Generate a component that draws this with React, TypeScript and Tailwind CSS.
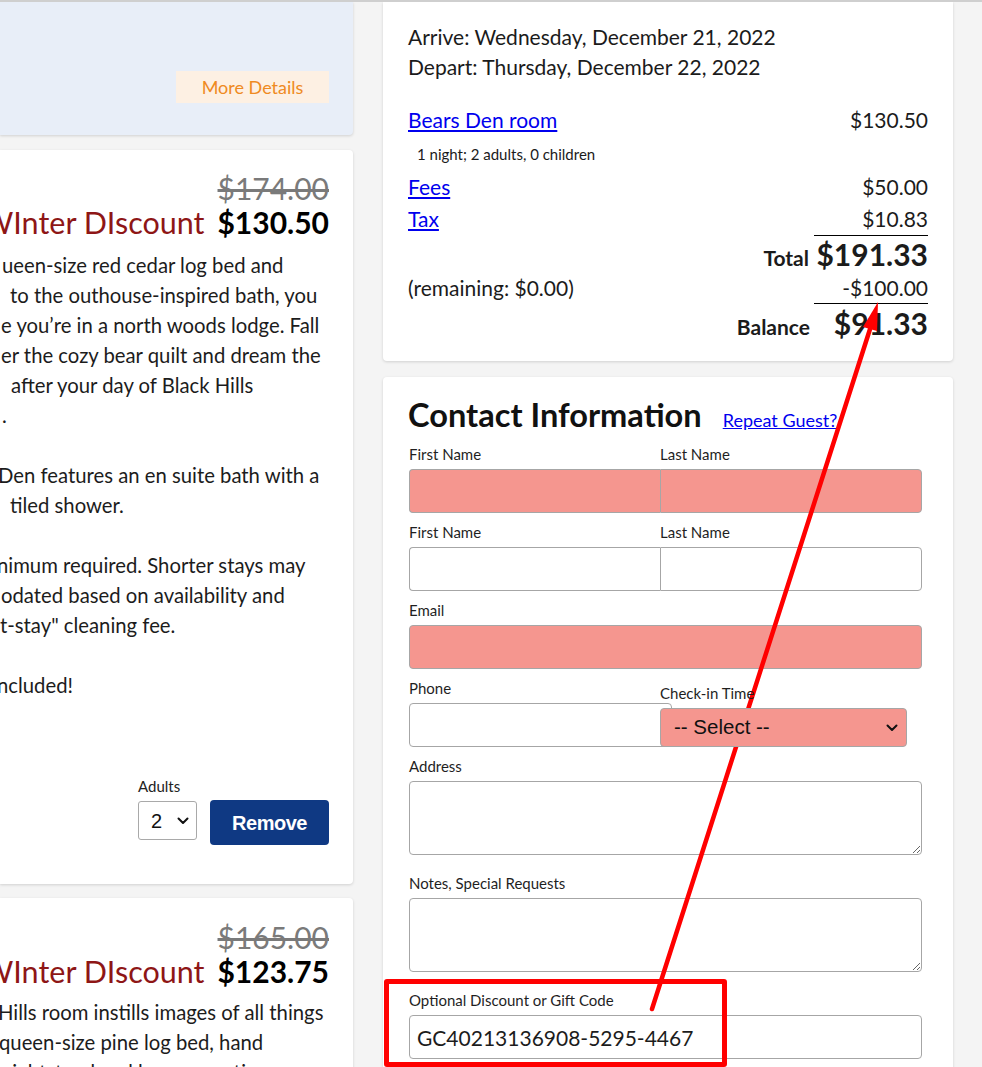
const salmon = "bg-[#f5968f]";

function Chevron({ className }: { className?: string }) {
  return (
    <svg viewBox="0 0 12 8" className={className} fill="none" stroke="currentColor" strokeWidth={2} strokeLinecap="round" strokeLinejoin="round">
      <path d="M1.5 1.5 6 6l4.5-4.5" />
    </svg>
  );
}

function Heading({ was, now }: { was: string; now: string }) {
  return (
    <div className="flex items-end justify-end gap-[13px]">
      <span className="shrink-0 whitespace-nowrap text-[30.5px] leading-[34px] text-[#8e1616]">WInter DIscount</span>
      <div className="flex shrink-0 flex-col items-end">
        <span className="text-[30px] leading-[34px] text-[#7a7a7a] line-through">{was}</span>
        <span className="text-[30px] leading-[34px] font-bold text-black">{now}</span>
      </div>
    </div>
  );
}

const roomLines: { t: string; c: string }[] = [
  { t: "ueen-size red cedar log bed and", c: "ml-[2px]" },
  { t: "to the outhouse-inspired bath, you", c: "ml-[10px]" },
  { t: "e you’re in a north woods lodge. Fall", c: "ml-[1px]" },
  { t: "er the cozy bear quilt and dream the", c: "ml-[1px]" },
  { t: "after your day of Black Hills", c: "ml-[11px]" },
  { t: ".", c: "ml-[2px]" },
  { t: "", c: "" },
  { t: "Den features an en suite bath with a", c: "-ml-[2px]" },
  { t: "tiled shower.", c: "ml-[10px]" },
  { t: "", c: "" },
  { t: "nimum required. Shorter stays may", c: "-ml-[3px]" },
  { t: "odated based on availability and", c: "ml-[1px]" },
  { t: "t-stay\" cleaning fee.", c: "ml-[0px]" },
  { t: "", c: "" },
  { t: "ncluded!", c: "-ml-[3px]" },
];

function Field({ label, children, className }: { label: string; children: React.ReactNode; className?: string }) {
  return (
    <div className={className}>
      <div className="text-[15px] leading-[20px] text-[#1f1f1f]">{label}</div>
      <div className="mt-[5px]">{children}</div>
    </div>
  );
}

export default function App() {
  return (
    <div className="relative h-[1067px] overflow-hidden border-t-2 border-[#cfcfcf] bg-[#f4f4f4] font-['Lato',sans-serif] text-[#1b1b1b]">
      <div className="flex gap-[30px]">
        {/* left column: room cards */}
        <div className="flex w-[353px] shrink-0 flex-col">
          <div className="flex h-[133px] items-end justify-end rounded-br-[4px] bg-[#e8eef8] pr-[24px] pb-[32px] shadow-[0_1px_3px_rgba(0,0,0,0.15)]">
            <div className="flex h-[32px] w-[153px] items-center justify-center bg-[#fdf0e3] text-[18px] text-[#ef8a22]">More Details</div>
          </div>

          <div className="mt-[15px] rounded-r-[4px] bg-white pt-[21px] pr-[24px] pb-[39px] shadow-[0_1px_3px_rgba(0,0,0,0.15)]">
            <Heading was="$174.00" now="$130.50" />
            <div className="mt-[11px] text-[20.3px] leading-[30px] text-[#1c1c1c]">
              {roomLines.map((l, i) =>
                l.t ? (
                  <div key={i} className={"whitespace-nowrap " + l.c}>{l.t}</div>
                ) : (
                  <div key={i} className="h-[30px]" />
                )
              )}
            </div>
            <div className="mt-[76px] flex items-end justify-end gap-[13px]">
              <div className="flex flex-col">
                <span className="text-[15px] leading-[20px] text-[#222]">Adults</span>
                <div className="mt-[5px] mb-[5px] flex h-[39px] w-[59px] items-center justify-between rounded-[3px] border border-[#a9a9a9] pl-[12px] pr-[7px] font-['Liberation_Sans',Arial,sans-serif] text-[20px] text-[#111]">
                  <span>2</span>
                  <Chevron className="w-[12px] h-[8px] text-[#111]" />
                </div>
              </div>
              <button className="flex h-[45px] w-[119px] items-center justify-center rounded-[4px] bg-[#0f3983] font-['Liberation_Sans',Arial,sans-serif] text-[20px] font-bold tracking-[-0.5px] text-white">
                Remove
              </button>
            </div>
          </div>

          <div className="mt-[14px] rounded-r-[4px] bg-white pt-[22px] pr-[24px] pb-[40px] shadow-[0_1px_3px_rgba(0,0,0,0.15)]">
            <Heading was="$165.00" now="$123.75" />
            <div className="mt-[9px] text-[20.3px] leading-[30px] text-[#1c1c1c]">
              <div className="-ml-[2px] whitespace-nowrap">Hills room instills images of all things</div>
              <div className="-ml-[1px] whitespace-nowrap">queen-size pine log bed, hand</div>
              <div className="ml-[1px] whitespace-nowrap">nightstand and lamp, a rustic</div>
            </div>
          </div>
        </div>

        {/* right column: summary and contact */}
        <div className="flex w-[570px] shrink-0 flex-col">
          <div className="rounded-b-[4px] bg-white pt-[20px] pr-[25px] pb-[19px] pl-[25px] text-[21px] shadow-[0_1px_3px_rgba(0,0,0,0.15)]">
            <div className="leading-[30px]">Arrive: Wednesday, December 21, 2022</div>
            <div className="leading-[30px]">Depart: Thursday, December 22, 2022</div>

            <div className="mt-[23px] grid grid-cols-[1fr_114px] leading-[30px]">
              <a className="justify-self-start text-[#0000ee] underline">Bears Den room</a>
              <span className="text-right">$130.50</span>
            </div>
            <div className="mt-[9px] pl-[9px] text-[15px] leading-[20px]">1 night; 2 adults, 0 children</div>
            <div className="mt-[7px] grid grid-cols-[1fr_114px] leading-[32px]">
              <a className="justify-self-start text-[#0000ee] underline">Fees</a>
              <span className="text-right">$50.00</span>
            </div>
            <div className="grid grid-cols-[1fr_114px] leading-[32px]">
              <a className="justify-self-start text-[#0000ee] underline">Tax</a>
              <span className="text-right">$10.83</span>
            </div>
            <div className="grid grid-cols-[1fr_114px] items-baseline">
              <span className="pr-[5px] text-right font-bold leading-[30px]">Total</span>
              <span className="border-t border-black text-right text-[30px] font-bold leading-[36px]">$191.33</span>
            </div>
            <div className="grid grid-cols-[1fr_114px] leading-[30px]">
              <span>(remaining: $0.00)</span>
              <span className="text-right">-$100.00</span>
            </div>
            <div className="grid grid-cols-[1fr_114px] items-baseline">
              <span className="pr-[4px] text-right font-bold leading-[30px]">Balance</span>
              <span className="border-t border-black text-right text-[30px] font-bold leading-[38px]">$91.33</span>
            </div>
          </div>

          <div className="mt-[16px] rounded-t-[4px] bg-white pt-[18px] pr-[31px] pb-[40px] pl-[26px] shadow-[0_1px_3px_rgba(0,0,0,0.15)]">
            <div className="flex items-baseline gap-[21px]">
              <h2 className="-ml-[1px] text-[32.6px] font-bold leading-[40px] text-[#111]">Contact Information</h2>
              <a className="text-[18px] text-[#0000ee] underline">Repeat Guest?</a>
            </div>

            <div className="mt-[9px] grid grid-cols-[251px_1fr]">
              <Field label="First Name">
                <div className={"h-[44px] rounded-l-[4px] border border-r-0 border-[#a6a6a6] " + salmon} />
              </Field>
              <Field label="Last Name">
                <div className={"h-[44px] rounded-r-[4px] border border-[#a6a6a6] " + salmon} />
              </Field>
            </div>

            <div className="mt-[9px] grid grid-cols-[251px_1fr]">
              <Field label="First Name">
                <input className="block h-[44px] w-full rounded-l-[4px] border border-r-0 border-[#a6a6a6] bg-white" />
              </Field>
              <Field label="Last Name">
                <input className="block h-[44px] w-full rounded-r-[4px] border border-[#a6a6a6] bg-white" />
              </Field>
            </div>

            <Field label="Email" className="mt-[9px]">
              <div className={"h-[44px] rounded-[4px] border border-[#a6a6a6] " + salmon} />
            </Field>

            <div className="mt-[9px] grid grid-cols-[251px_1fr]">
              <Field label="Phone">
                <input className="block h-[44px] w-[263px] rounded-[4px] border border-[#a6a6a6] bg-white" />
              </Field>
              <Field label="Check-in Time" className="relative z-10 mt-[5px]">
                <div className={"flex h-[39px] w-[247px] items-center justify-between rounded-[4px] border border-[#a6a6a6] pl-[13px] pr-[8px] font-['Liberation_Sans',Arial,sans-serif] text-[20.5px] text-[#111] " + salmon}>
                  <span>-- Select --</span>
                  <Chevron className="w-[12px] h-[8px] text-[#111]" />
                </div>
              </Field>
            </div>

            <Field label="Address" className="mt-[9px]">
              <textarea className="block h-[74px] w-full rounded-[4px] border border-[#a6a6a6] bg-white" />
            </Field>

            <Field label="Notes, Special Requests" className="mt-[18px]">
              <textarea className="block h-[74px] w-full rounded-[4px] border border-[#a6a6a6] bg-white" />
            </Field>

            <Field label="Optional Discount or Gift Code" className="mt-[18px]">
              <input
                readOnly
                value="GC40213136908-5295-4467"
                className="block h-[44px] w-full rounded-[4px] border border-[#a6a6a6] bg-white pl-[7px] text-[21px] text-[#1c1c1c]"
              />
            </Field>
          </div>
        </div>
      </div>

      {/* red annotation overlay */}
      <div className="pointer-events-none absolute top-[977px] left-[384px] h-[88px] w-[343px] rounded-[3px] border-[5px] border-[#ff0000]" />
      <svg className="pointer-events-none absolute top-0 left-0" width="982" height="1067" viewBox="0 -2 982 1067">
        <line x1="652" y1="1005" x2="871" y2="322" stroke="#ff0000" strokeWidth="4.5" strokeLinecap="round" />
        <polygon points="878,298 877,327 863,323" fill="#ff0000" />
      </svg>
    </div>
  );
}
